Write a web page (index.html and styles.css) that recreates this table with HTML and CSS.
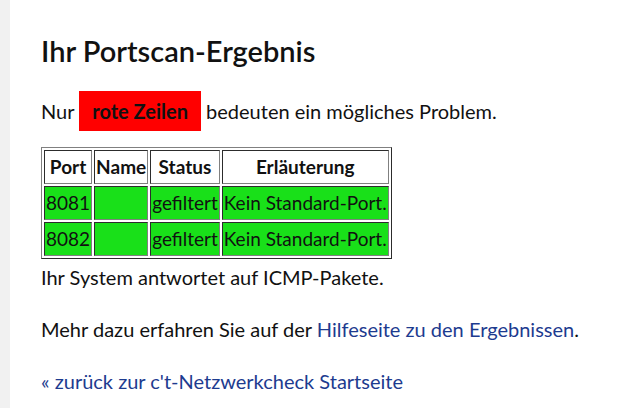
FILE: index.html
```html
<!DOCTYPE html>
<html lang="de">
<head>
<meta charset="utf-8">
<title>Portscan-Ergebnis</title>
<link rel="stylesheet" href="styles.css">
</head>
<body>
<div class="page">
  <aside class="strip"></aside>
  <main class="content">
    <h1 class="title">Ihr Portscan-Ergebnis</h1>
    <p class="intro">Nur <span class="hint">rote Zeilen</span> bedeuten ein mögliches Problem.</p>
    <table class="scan">
      <thead>
        <tr><th>Port</th><th>Name</th><th>Status</th><th>Erläuterung</th></tr>
      </thead>
      <tbody>
        <tr class="ok"><td>8081</td><td></td><td>gefiltert</td><td>Kein Standard-Port.</td></tr>
        <tr class="ok"><td>8082</td><td></td><td>gefiltert</td><td>Kein Standard-Port.</td></tr>
      </tbody>
    </table>
    <p class="text text-first">Ihr System antwortet auf ICMP-Pakete.</p>
    <p class="text">Mehr dazu erfahren Sie auf der <a class="link" href="#">Hilfeseite zu den Ergebnissen</a>.</p>
    <p class="text"><a class="link" href="#">« zurück zur c't-Netzwerkcheck Startseite</a></p>
  </main>
</div>
</body>
</html>
```

FILE: styles.css
```css
html, body {
  margin: 0;
  padding: 0;
  background: #ffffff;
}
body {
  font-family: Lato, "Open Sans", sans-serif;
  font-size: 20px;
  color: #111111;
}
.page {
  display: flex;
  min-height: 408px;
}
.strip {
  width: 10px;
  flex: 0 0 10px;
  background: #f1f1f1;
}
.content {
  flex: 1;
  padding: 0 0 0 31px;
}
.title {
  margin: 33px 0 0 0;
  font-size: 29px;
  line-height: 36px;
  font-weight: 600;
  color: #111;
}
.intro {
  margin: 28px 0 22px 0;
  line-height: 28px;
}
.hint {
  background: #ff0000;
  color: #111;
  font-weight: 700;
  padding: 8px 13px;
}
.scan {
  border: 1px outset #808080;
  border-spacing: 2px;
  border-collapse: separate;
  font-size: 19px;
}
.scan th,
.scan td {
  border: 1px inset #808080;
  padding: 1px;
  line-height: 30px;
}
.scan th {
  font-weight: 700;
  text-align: center;
}
.scan td {
  text-align: left;
}
.scan .ok td {
  background: #19e019;
}
.text {
  margin: 0 0 22px 0;
  line-height: 30px;
}
.text-first {
  margin-top: 3px;
}
.link {
  color: #1d3b8f;
  text-decoration: none;
}
```
